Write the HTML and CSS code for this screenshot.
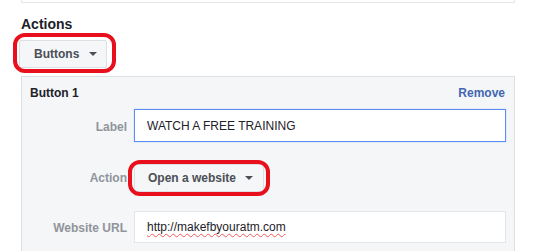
FILE: index.html
```html
<!DOCTYPE html>
<html lang="en">
<head>
    <meta charset="UTF-8">
    <meta name="viewport" content="width=device-width, initial-scale=1.0">
    <title>Actions</title>
    <link rel="stylesheet" href="styles.css">
</head>
<body>
    <div class="page">
        <div class="top-box"></div>
        <h3 class="section-title">Actions</h3>
        <span class="circled circled-buttons">
            <button class="dropdown" type="button">Buttons <span class="caret"></span></button>
        </span>
        <div class="panel">
            <div class="panel-head">
                <span class="panel-title">Button 1</span>
                <a class="remove" href="#">Remove</a>
            </div>
            <div class="form-row row-label">
                <label for="btnLabel">Label</label>
                <input type="text" id="btnLabel" class="field focused" value="WATCH A FREE TRAINING">
            </div>
            <div class="form-row row-action">
                <label>Action</label>
                <div>
                    <span class="circled circled-action">
                        <button class="dropdown" type="button">Open a website <span class="caret"></span></button>
                    </span>
                </div>
            </div>
            <div class="form-row row-url">
                <label for="btnUrl">Website URL</label>
                <div class="field url-field"><span class="typo">http://makefbyouratm.com</span></div>
            </div>
        </div>
    </div>
</body>
</html>
```

FILE: styles.css
```css
body {
    font-family: "Liberation Sans", Arial, sans-serif;
    background-color: #fff;
    margin: 0;
    padding: 0;
    color: #1d2129;
}
.page {
    padding-left: 21px;
    width: 494px;
}
.top-box {
    height: 2px;
    border: 1px solid #e5e6e9;
    border-top: none;
}
.section-title {
    font-size: 14px;
    font-weight: bold;
    margin: 12px 0 0 0;
    line-height: 18px;
    color: #1d2129;
}
.circled {
    position: relative;
    display: inline-block;
}
.circled::after {
    content: "";
    position: absolute;
    border: 4px solid #e8101c;
    border-radius: 12px;
    pointer-events: none;
}
.circled-buttons {
    margin: 7px 0 0 -2px;
}
.circled-buttons::after {
    left: -6px;
    top: -7px;
    right: -9px;
    bottom: -5px;
}
.circled-action::after {
    left: -6px;
    top: -4px;
    right: -6px;
    bottom: -4px;
}
.dropdown {
    display: block;
    box-sizing: border-box;
    height: 28px;
    padding: 0 0 0 14px;
    background-color: #f5f6f7;
    border: 1px solid #dcdfe3;
    border-radius: 2px;
    font-family: inherit;
    font-size: 12px;
    font-weight: bold;
    color: #4b4f56;
    text-align: left;
    white-space: nowrap;
    cursor: pointer;
}
.circled-buttons .dropdown {
    width: 88px;
}
.circled-action .dropdown {
    width: 130px;
    padding-left: 13px;
}
.caret {
    display: inline-block;
    width: 0;
    height: 0;
    margin-left: 6px;
    vertical-align: 2px;
    border-left: 4px solid transparent;
    border-right: 4px solid transparent;
    border-top: 4px solid #4b4f56;
}
.panel {
    margin-top: 8px;
    background-color: #f5f6f7;
    border: 1px solid #dddfe2;
    padding: 0 8px 20px 0;
}
.panel-head {
    display: flex;
    justify-content: space-between;
    align-items: center;
    height: 32px;
    padding-left: 8px;
    font-size: 12px;
    font-weight: bold;
}
.panel-title {
    color: #1d2129;
}
.remove {
    color: #4267b2;
    text-decoration: none;
    margin-right: 1px;
}
.form-row {
    display: grid;
    grid-template-columns: 105px 372px;
    column-gap: 7px;
    align-items: center;
}
.form-row label {
    text-align: right;
    font-size: 12px;
    font-weight: bold;
    color: #90949c;
}
.row-label {
    margin-bottom: 22px;
}
.row-label label {
    padding-top: 3px;
}
.row-action {
    margin-bottom: 19px;
}
.field {
    box-sizing: border-box;
    width: 372px;
    background-color: #fff;
    border: 1px solid #e3e5e8;
    font-family: inherit;
    font-size: 12px;
    color: #1d2129;
    padding: 0 12px;
    margin: 0;
}
.focused {
    height: 33px;
    border: 1px solid #5b8ff5;
    box-shadow: 0 0 1px #8fb2f7;
    outline: none;
}
.url-field {
    height: 32px;
    line-height: 30px;
}
.row-url label {
    padding-top: 2px;
}
.typo {
    text-decoration: underline wavy #f05a5a;
    text-decoration-thickness: 1px;
    text-underline-offset: 2px;
}
```
